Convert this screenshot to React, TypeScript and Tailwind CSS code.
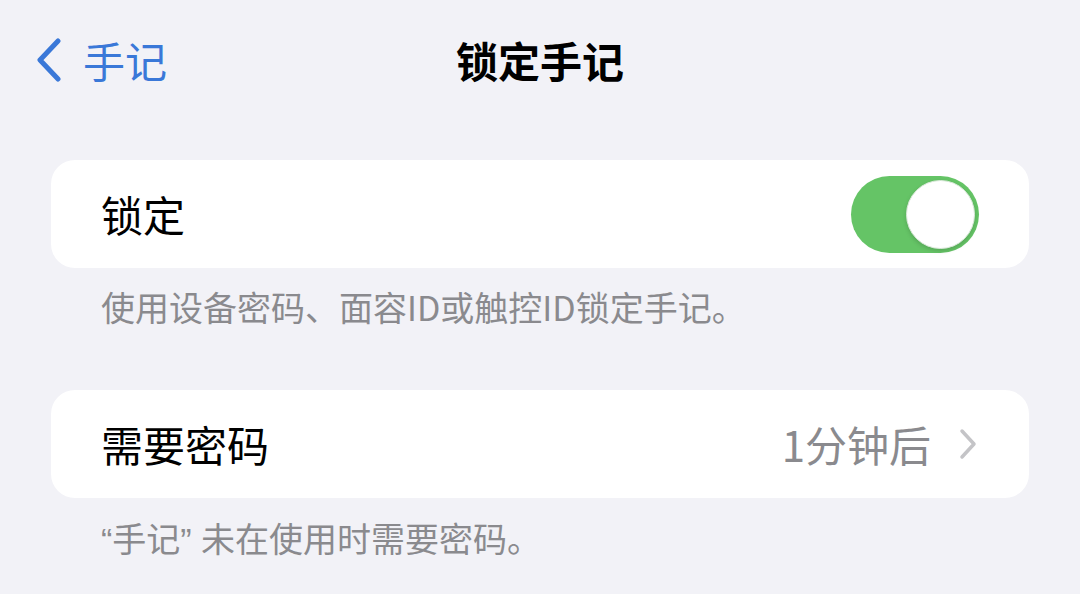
import React from "react";

const font = { fontFamily: '"Noto Sans CJK SC", "Noto Sans", sans-serif' };

function Toggle({ on }: { on: boolean }) {
  return (
    <div
      className={`flex h-[77px] w-[128px] items-center rounded-full p-[4px] ${
        on ? "justify-end bg-[#65c466]" : "justify-start bg-[#e9e9eb]"
      }`}
    >
      <div className="h-[69px] w-[69px] rounded-full border border-[#d9e8d9] bg-white shadow-[0_2px_4px_rgba(0,0,0,0.15)]" />
    </div>
  );
}

// narrow western quotes, like the system font draws them
const Quote = ({ children }: { children: string }) => (
  <span style={{ fontFamily: '"Liberation Sans", sans-serif' }}>{children}</span>
);

export default function App() {
  return (
    <div
      className="h-[594px] w-[1080px] overflow-hidden bg-[#f2f2f7]"
      style={font}
    >
      {/* Nav bar */}
      <div className="relative flex h-[120px] items-center px-[35px]">
        <div className="flex items-center gap-[20px] text-[#3a78d8]">
          <svg width="28" height="44" viewBox="0 0 28 44" fill="none">
            <path
              d="M23 3 L5 22 L23 41"
              stroke="currentColor"
              strokeWidth="5"
              strokeLinecap="round"
              strokeLinejoin="round"
            />
          </svg>
          <span className="text-[42px] leading-none">手记</span>
        </div>
        <div className="absolute inset-x-0 top-0 flex h-[120px] items-center justify-center">
          <span className="text-[42px] font-bold leading-none text-black">
            锁定手记
          </span>
        </div>
      </div>

      <div className="px-[51px] pt-[40px]">
        {/* Lock card */}
        <div className="flex h-[108px] items-center justify-between rounded-[24px] bg-white pl-[50px] pr-[50px]">
          <span className="text-[42px] leading-none text-black">锁定</span>
          <Toggle on />
        </div>
        <p className="mt-[19px] pl-[50px] text-[34px] leading-[40px] text-[#8a8a8e]">
          使用设备密码、面容ID或触控ID锁定手记。
        </p>

        {/* Require password card */}
        <div className="mt-[63px] flex h-[108px] items-center justify-between rounded-[24px] bg-white pl-[50px] pr-[52px]">
          <span className="text-[42px] leading-none text-black">需要密码</span>
          <div className="flex items-center gap-[28px] text-[#8a8a8e]">
            <span className="text-[42px] leading-none">1分钟后</span>
            <svg width="18" height="32" viewBox="0 0 18 32" fill="none">
              <path
                d="M3 3 L15 16 L3 29"
                stroke="#c4c4c7"
                strokeWidth="3.5"
                strokeLinecap="round"
                strokeLinejoin="round"
              />
            </svg>
          </div>
        </div>
        <p className="mt-[20px] pl-[50px] text-[34px] leading-[40px] text-[#8a8a8e]">
          <Quote>“</Quote>手记<Quote>” </Quote>未在使用时需要密码。
        </p>
      </div>
    </div>
  );
}
